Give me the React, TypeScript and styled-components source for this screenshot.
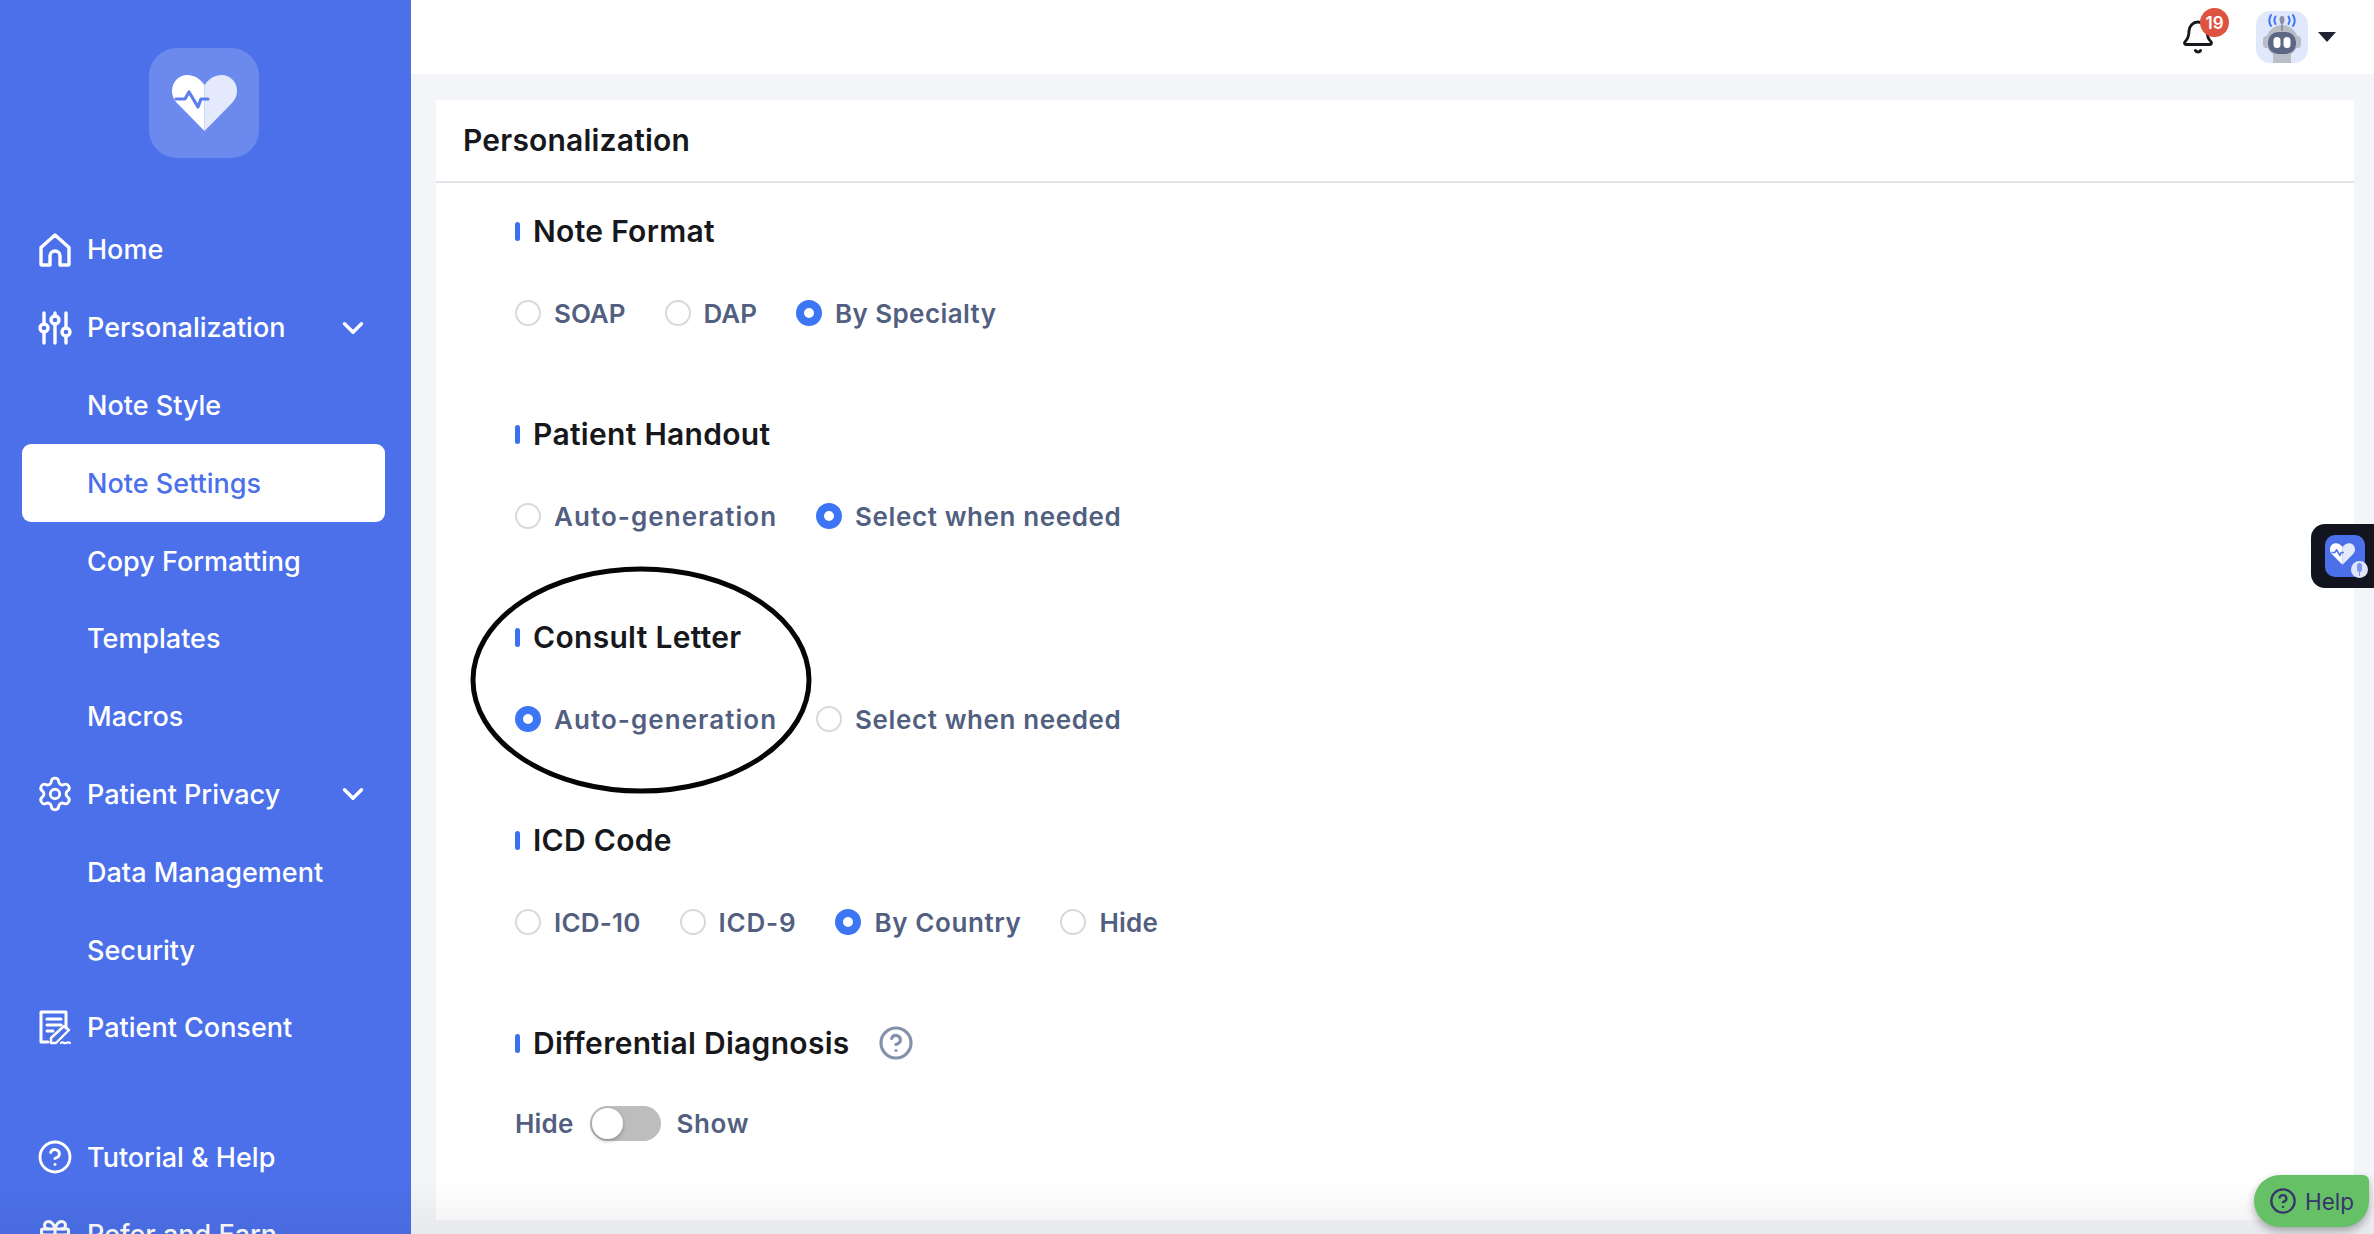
import styled, { createGlobalStyle } from "styled-components";
import { Bell, ChevronDown, CircleHelp, Gift, Settings } from "lucide-react";
import type { ReactNode } from "react";

const GlobalStyle = createGlobalStyle`
  html, body {
    margin: 0;
    padding: 0;
    height: 100%;
    overflow: hidden;
    background: #f3f5f9;
    font-family: Inter, "Noto Sans", sans-serif;
  }
  * { box-sizing: border-box; }
`;

const HomeIcon = () => (
  <svg width="34" height="34" viewBox="0 0 34 34" fill="none" stroke="#fff" strokeWidth="3.4" strokeLinejoin="round">
    <path d="M3 14.5 17 2l14 12.5V31a1 1 0 0 1-1 1h-8v-9a5 5 0 0 0-10 0v9H4a1 1 0 0 1-1-1Z" />
  </svg>
);

const SlidersIcon = () => (
  <svg width="34" height="34" viewBox="0 0 34 34" fill="none" stroke="#fff" strokeWidth="3.4" strokeLinecap="round">
    <path d="M6 2v11M6 21v11M17 2v3M17 13v19M28 2v15M28 25v7" />
    <circle cx="6" cy="17" r="4" />
    <circle cx="17" cy="9" r="4" />
    <circle cx="28" cy="21" r="4" />
  </svg>
);

const ConsentIcon = () => (
  <svg width="34" height="36" viewBox="0 0 34 36" fill="none" stroke="#fff" strokeWidth="3" strokeLinecap="round" strokeLinejoin="round">
    <path d="M10 32H3V2h25v16" />
    <path d="M9 9h14M9 15h14M9 21h6" strokeWidth="3" />
    <path d="M13 33v-5l13-12 5 4-13 13Z" strokeWidth="2.400" />
    <path d="M23 33c2-2 3 1 5 0s3-1 4 0" strokeWidth="2.200" />
  </svg>
);

const HeartLogo = () => (
  <svg width="65" height="56" viewBox="0 0 65 56">
    <path fill="#fff" d="M32.5 10C28 3.500 22 0 15.500 0 6.500 0 0 7 0 16c0 5.500 2.500 9.500 6 13l26.500 27Z" />
    <path fill="#e4eafc" d="M32.500 10C37 3.500 43 0 49.500 0 58.500 0 65 7 65 16c0 5.500-2.500 9.500-6 13L32.500 56Z" />
    <path fill="none" stroke="#5c7eec" strokeWidth="3.200" strokeLinecap="round" strokeLinejoin="round" d="M4 24h9l4-7 9 15 3-8h7" />
  </svg>
);

const SmallHeart = () => (
  <svg width="25" height="22" viewBox="0 0 65 56">
    <path fill="#fff" d="M32.5 10C28 3.500 22 0 15.500 0 6.500 0 0 7 0 16c0 5.500 2.500 9.500 6 13l26.500 27Z" />
    <path fill="#e4eafc" d="M32.500 10C37 3.500 43 0 49.500 0 58.500 0 65 7 65 16c0 5.500-2.500 9.500-6 13L32.500 56Z" />
    <path fill="none" stroke="#4c70ea" strokeWidth="4" strokeLinejoin="round" d="M4 24h9l4-7 9 15 3-8h7" />
  </svg>
);

const RobotIcon = () => (
  <svg width="40" height="50" viewBox="0 0 40 50" fill="none">
    <path d="M11 38h18v12H11Z" fill="#b9bdc6" />
    <rect x="1" y="23" width="7" height="12" rx="3.500" fill="#b9bdc6" />
    <rect x="32" y="23" width="7" height="12" rx="3.500" fill="#b9bdc6" />
    <circle cx="20" cy="28" r="16" fill="#b9bdc6" />
    <rect x="6" y="19" width="28" height="22" rx="10" fill="#5c6785" />
    <rect x="11.500" y="24" width="7" height="11" rx="3.500" fill="#fff" />
    <rect x="21.500" y="24" width="7" height="11" rx="3.500" fill="#fff" />
    <path d="M20 3c2 0 2.500 1.500 2.500 3.500S21 12 20 12s-2.500-3.500-2.500-5.500S18 3 20 3Z" fill="#8a92a4" />
    <path d="M20 12v6" stroke="#8a92a4" strokeWidth="2" />
    <path d="M13.500 3.500c-1.500 2.500-1.500 5 0 7.500M9 2c-2 3.500-2 8 0 11M26.500 3.500c1.500 2.500 1.500 5 0 7.500M31 2c2 3.500 2 8 0 11" stroke="#3d76f5" strokeWidth="2" strokeLinecap="round" />
  </svg>
);

const MicIcon = () => (
  <svg width="11" height="13" viewBox="0 0 11 13" fill="#7c96ee">
    <rect x="3" y="0" width="5" height="9" rx="2.500" />
    <path d="M5 9h1v4H5Z" />
  </svg>
);

const CaretIcon = () => (
  <svg width="18" height="10" viewBox="0 0 18 10">
    <path d="M0 0h18L9 10Z" fill="#1f2430" />
  </svg>
);

const EllipseMark = () => (
  <svg width="342" height="228" viewBox="0 0 342 228" fill="none">
    <ellipse cx="171" cy="114" rx="168" ry="111" stroke="#050505" strokeWidth="5" />
  </svg>
);

type NavEntry = { label: string; icon?: ReactNode; expandable?: boolean; active?: boolean; spaced?: boolean };

const navEntries: NavEntry[] = [
  { label: "Home", icon: <HomeIcon /> },
  { label: "Personalization", icon: <SlidersIcon />, expandable: true },
  { label: "Note Style" },
  { label: "Note Settings", active: true },
  { label: "Copy Formatting" },
  { label: "Templates" },
  { label: "Macros" },
  { label: "Patient Privacy", icon: <Settings size={38} strokeWidth={1.8} color="#fff" />, expandable: true },
  { label: "Data Management" },
  { label: "Security" },
  { label: "Patient Consent", icon: <ConsentIcon /> },
  { label: "Tutorial & Help", icon: <CircleHelp size={36} strokeWidth={1.9} color="#fff" />, spaced: true },
  { label: "Refer and Earn", icon: <Gift size={36} strokeWidth={2} color="#fff" /> },
];

type Choice = { label: string; checked?: boolean; tracking?: number };

const sections: { title: string; choices: Choice[] }[] = [
  {
    title: "Note Format",
    choices: [
      { label: "SOAP", tracking: 0 },
      { label: "DAP", tracking: 0 },
      { label: "By Specialty", checked: true, tracking: 0.4 },
    ],
  },
  {
    title: "Patient Handout",
    choices: [
      { label: "Auto-generation", tracking: 1.05 },
      { label: "Select when needed", checked: true, tracking: 0.6 },
    ],
  },
  {
    title: "Consult Letter",
    choices: [
      { label: "Auto-generation", checked: true, tracking: 1.05 },
      { label: "Select when needed", tracking: 0.6 },
    ],
  },
  {
    title: "ICD Code",
    choices: [
      { label: "ICD-10" },
      { label: "ICD-9", tracking: 0.8 },
      { label: "By Country", checked: true, tracking: 0.6 },
      { label: "Hide" },
    ],
  },
];

export default function App() {
  return (
    <Page>
      <GlobalStyle />
      <Sidebar>
        <LogoTile>
          <HeartLogo />
        </LogoTile>
        <Nav>
          {navEntries.map((entry) => (
            <NavItem key={entry.label} $active={entry.active} $spaced={entry.spaced}>
              <NavIcon>{entry.icon}</NavIcon>
              <NavLabel>{entry.label}</NavLabel>
              {entry.expandable && (
                <NavChevron>
                  <ChevronDown size={34} strokeWidth={2.4} color="#fff" />
                </NavChevron>
              )}
            </NavItem>
          ))}
        </Nav>
      </Sidebar>
      <Main>
        <TopBar>
          <BellWrap>
            <Bell size={36} strokeWidth={1.9} color="#15171c" />
            <BellBadge>19</BellBadge>
          </BellWrap>
          <Avatar>
            <RobotIcon />
          </Avatar>
          <CaretIcon />
        </TopBar>
        <Content>
          <Card>
            <CardHeader>Personalization</CardHeader>
            <CardBody>
              {sections.map((section) => (
                <Section key={section.title}>
                  <Heading>
                    <HeadingBar />
                    {section.title}
                  </Heading>
                  <Options>
                    {section.choices.map((choice) => (
                      <Option key={choice.label}>
                        <Radio $checked={choice.checked} />
                        <OptionText $tracking={choice.tracking}>{choice.label}</OptionText>
                      </Option>
                    ))}
                  </Options>
                </Section>
              ))}
              <Section>
                <Heading>
                  <HeadingBar />
                  Differential Diagnosis
                  <HeadingHelp>
                    <CircleHelp size={36} strokeWidth={2.1} color="#8590ab" />
                  </HeadingHelp>
                </Heading>
                <ToggleRow>
                  <OptionText>Hide</OptionText>
                  <Toggle>
                    <ToggleKnob />
                  </Toggle>
                  <OptionText $tracking={0.6}>Show</OptionText>
                </ToggleRow>
              </Section>
            </CardBody>
          </Card>
        </Content>
      </Main>
      <Annotation>
        <EllipseMark />
      </Annotation>
      <BottomFade />
      <SideTab>
        <SideTabTile>
          <SmallHeart />
          <MicBadge>
            <MicIcon />
          </MicBadge>
        </SideTabTile>
      </SideTab>
      <HelpButton>
        <CircleHelp size={28} strokeWidth={2} color="#37366b" />
        Help
      </HelpButton>
    </Page>
  );
}

const Page = styled.div`
  position: relative;
  display: flex;
  width: 2374px;
  height: 1234px;
  overflow: hidden;
  background: #f3f5f9;
`;

const Sidebar = styled.aside`
  flex: 0 0 411px;
  height: 1234px;
  padding: 48px 26px 0 22px;
  background: #4c70ea;
  overflow: hidden;
`;

const LogoTile = styled.div`
  display: flex;
  align-items: center;
  justify-content: center;
  width: 110px;
  height: 110px;
  margin: 0 0 53px 127px;
  border-radius: 28px;
  background: #6c89ee;
`;

const Nav = styled.nav`
  display: flex;
  flex-direction: column;
`;

const NavItem = styled.div<{ $active?: boolean; $spaced?: boolean }>`
  display: flex;
  align-items: center;
  flex: 0 0 77.8px;
  height: 77.8px;
  margin-top: ${(p) => (p.$spaced ? "51.5px" : "0")};
  padding-left: 15px;
  border-radius: 9px;
  background: ${(p) => (p.$active ? "#fff" : "transparent")};
  color: ${(p) => (p.$active ? "#4c70ea" : "#fff")};
`;

const NavIcon = styled.span`
  display: flex;
  align-items: center;
  justify-content: center;
  flex: 0 0 36px;
  min-width: 0;
  margin-right: 14px;

  svg {
    flex: none;
  }
`;

const NavLabel = styled.span`
  font-size: 27px;
  font-weight: 500;
  white-space: nowrap;
`;

const NavChevron = styled.span`
  display: flex;
  margin-left: auto;
  margin-right: 15px;
`;

const Main = styled.main`
  display: flex;
  flex: 1;
  flex-direction: column;
  min-width: 0;
`;

const TopBar = styled.header`
  display: flex;
  align-items: center;
  justify-content: flex-end;
  flex: 0 0 74px;
  padding-right: 38px;
  background: #fff;
`;

const BellWrap = styled.div`
  position: relative;
  display: flex;
  margin-right: 40px;
`;

const BellBadge = styled.span`
  position: absolute;
  top: -11px;
  left: 20px;
  display: flex;
  align-items: center;
  justify-content: center;
  width: 29px;
  height: 29px;
  border-radius: 50%;
  background: #de5340;
  color: #fff;
  font-size: 17px;
  font-weight: 600;
`;

const Avatar = styled.div`
  display: flex;
  align-items: flex-end;
  justify-content: center;
  width: 52px;
  height: 52px;
  margin-right: 10px;
  overflow: hidden;
  border-radius: 14px;
  background: #e2e8fb;
`;

const Content = styled.div`
  flex: 1;
  padding: 26px 20px 14px 25px;
`;

const Card = styled.section`
  height: 100%;
  background: #fff;
`;

const CardHeader = styled.h1`
  display: flex;
  align-items: center;
  height: 83px;
  margin: 0;
  padding: 0 0 2px 27px;
  border-bottom: 2px solid #e2e4ea;
  color: #17181c;
  font-size: 30px;
  font-weight: 600;
  letter-spacing: 0.2px;
`;

const CardBody = styled.div`
  display: flex;
  flex-direction: column;
  gap: 81px;
  padding: 28px 0 0 79px;
`;

const Section = styled.div`
  display: flex;
  flex-direction: column;
  gap: 42px;
`;

const Heading = styled.h2`
  display: flex;
  align-items: center;
  height: 40px;
  margin: 0;
  color: #17181c;
  font-size: 30px;
  font-weight: 600;
  letter-spacing: 0.3px;
`;

const HeadingBar = styled.span`
  width: 5px;
  height: 19px;
  margin-right: 13px;
  border-radius: 3px;
  background: #3b70ee;
`;

const HeadingHelp = styled.span`
  display: flex;
  margin-left: 28px;
`;

const Options = styled.div`
  display: flex;
  align-items: center;
  gap: 39px;
  height: 40px;
`;

const Option = styled.label`
  display: flex;
  align-items: center;
  gap: 13px;
`;

const Radio = styled.span<{ $checked?: boolean }>`
  width: 26px;
  height: 26px;
  border-radius: 50%;
  background: #fff;
  border: ${(p) => (p.$checked ? "8.5px solid #3d76f5" : "2px solid #d9d9d9")};
`;

const OptionText = styled.span<{ $tracking?: number }>`
  color: #525f80;
  font-size: 26px;
  font-weight: 600;
  letter-spacing: ${(p) => p.$tracking ?? 0.2}px;
  white-space: nowrap;
`;

const ToggleRow = styled.div`
  display: flex;
  align-items: center;
  gap: 16px;
  height: 36px;
`;

const Toggle = styled.span`
  display: flex;
  align-items: center;
  width: 71px;
  height: 35px;
  padding-left: 2px;
  border-radius: 18px;
  background: #bdbdbd;
`;

const ToggleKnob = styled.span`
  width: 31px;
  height: 31px;
  border-radius: 50%;
  background: #fff;
  box-shadow: 0 2px 4px rgba(0, 0, 0, 0.25);
`;

const Annotation = styled.div`
  position: absolute;
  top: 566px;
  left: 470px;
  display: flex;
  pointer-events: none;
`;

const BottomFade = styled.div`
  position: absolute;
  left: 0;
  right: 0;
  bottom: 0;
  height: 54px;
  background: linear-gradient(rgba(0, 0, 0, 0), rgba(0, 0, 0, 0.05));
  pointer-events: none;
`;

const SideTab = styled.div`
  position: absolute;
  top: 524px;
  right: 0;
  display: flex;
  align-items: center;
  width: 63px;
  height: 64px;
  padding-left: 14px;
  border-radius: 14px 0 0 14px;
  background: #12151f;
`;

const SideTabTile = styled.div`
  position: relative;
  display: flex;
  align-items: center;
  justify-content: center;
  width: 40px;
  height: 42px;
  padding: 0 5px 4px 0;
  border-radius: 10px;
  background: #4c70ea;
`;

const MicBadge = styled.span`
  position: absolute;
  right: -3px;
  bottom: -1px;
  display: flex;
  align-items: center;
  justify-content: center;
  width: 17px;
  height: 17px;
  border-radius: 50%;
  background: #dfe5fa;
`;

const HelpButton = styled.div`
  position: absolute;
  top: 1175px;
  left: 2254px;
  display: flex;
  align-items: center;
  gap: 8px;
  width: 115px;
  height: 52px;
  padding-left: 15px;
  border-radius: 26px 6px 26px 26px;
  background: #66c066;
  box-shadow: 0 4px 8px rgba(0, 0, 0, 0.3);
  color: #37366b;
  font-size: 22.5px;
`;
